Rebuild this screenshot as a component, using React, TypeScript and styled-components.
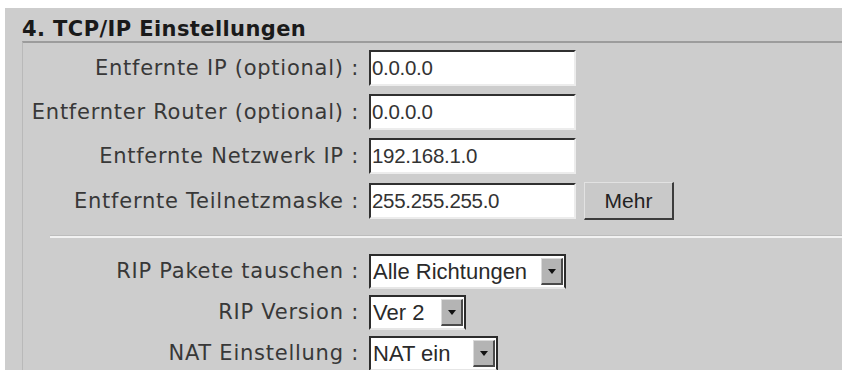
import React from 'react'
import styled, { createGlobalStyle } from 'styled-components'

const GlobalStyle = createGlobalStyle`
  body {
    margin: 0;
    background: #ffffff;
  }
`

const Page = styled.div`
  padding: 8px 0 0 5px;
  height: 370px;
  box-sizing: border-box;
  overflow: hidden;
`

const Panel = styled.div`
  background: #cdcdcd;
  height: 100%;
`

const Title = styled.div`
  height: 33px;
  padding-left: 17px;
  display: flex;
  align-items: flex-end;
  font-family: 'DejaVu Sans', Verdana, sans-serif;
  font-weight: bold;
  font-size: 21px;
  letter-spacing: 0.4px;
  color: #1a1a1a;
  padding-bottom: 1px;
  box-sizing: border-box;
  line-height: 1;
`

const Section = styled.div`
  margin-left: 17px;
  border-top: 2px solid #9c9c9c;
  border-left: 1px solid #b9b9b9;
  padding-top: 7px;
  height: 330px;
`

const Rows = styled.div<{ $gap: number }>`
  display: grid;
  grid-template-columns: 336px auto;
  column-gap: 10px;
  row-gap: ${p => p.$gap}px;
  align-items: center;
  justify-items: start;
`

const Label = styled.div`
  justify-self: end;
  font-family: 'DejaVu Sans', Verdana, sans-serif;
  font-size: 21px;
  letter-spacing: 0.75px;
  color: #383838;
  white-space: nowrap;
  line-height: 1;
`

const Field = styled.div`
  display: flex;
  align-items: center;
  gap: 8px;
`

const TextBox = styled.div`
  width: 207px;
  height: 36px;
  box-sizing: border-box;
  background: #ffffff;
  border-top: 2px solid #303030;
  border-left: 2px solid #303030;
  border-right: 2px solid #ececec;
  border-bottom: 2px solid #ececec;
  display: flex;
  align-items: center;
  padding-left: 1px;
  font-family: 'Liberation Sans', Arial, sans-serif;
  font-size: 20.5px;
  letter-spacing: -0.3px;
  color: #333333;
`

const Button = styled.div`
  width: 90px;
  height: 38px;
  box-sizing: border-box;
  background: #c9c9c9;
  border-top: 1px solid #e2e2e2;
  border-left: 1px solid #e2e2e2;
  border-right: 2px solid #3c3c3c;
  border-bottom: 2px solid #3c3c3c;
  display: flex;
  align-items: center;
  justify-content: center;
  font-family: 'Liberation Sans', Arial, sans-serif;
  font-size: 21px;
  color: #222222;
`

const Divider = styled.div`
  margin: 15px 0 16px 27px;
  height: 2px;
  background: #f2f2f2;
  border-top: 1px solid #bdbdbd;
`

const SelectBox = styled.div<{ $width: number }>`
  width: ${p => p.$width}px;
  height: 35px;
  box-sizing: border-box;
  background: #ffffff;
  border-top: 2px solid #2c2c2c;
  border-left: 2px solid #2c2c2c;
  border-right: 2px solid #2c2c2c;
  border-bottom: 2px solid #e6e6e6;
  display: flex;
  align-items: center;
  justify-content: space-between;
  padding: 0 1px 0 2px;
  font-family: 'Liberation Sans', Arial, sans-serif;
  font-size: 22px;
  color: #2a2a2a;
  white-space: nowrap;
`

const Arrow = styled.span`
  flex: none;
  width: 22px;
  height: 27px;
  box-sizing: border-box;
  background: #b4b4b4;
  border-top: 1px solid #dadada;
  border-left: 1px solid #dadada;
  border-right: 2px solid #4a4a4a;
  border-bottom: 2px solid #4a4a4a;
  display: flex;
  align-items: center;
  justify-content: center;

  &::after {
    content: '';
    border-left: 4px solid transparent;
    border-right: 4px solid transparent;
    border-top: 5px solid #111111;
  }
`

const addresses = [
  { label: 'Entfernte IP (optional) :', value: '0.0.0.0' },
  { label: 'Entfernter Router (optional) :', value: '0.0.0.0' },
  { label: 'Entfernte Netzwerk IP :', value: '192.168.1.0' },
  { label: 'Entfernte Teilnetzmaske :', value: '255.255.255.0', more: true },
]

const selects = [
  { label: 'RIP Pakete tauschen :', value: 'Alle Richtungen', width: 197 },
  { label: 'RIP Version :', value: 'Ver 2', width: 97 },
  { label: 'NAT Einstellung :', value: 'NAT ein', width: 129 },
]

const App: React.FC = () => (
  <Page>
    <GlobalStyle />
    <Panel>
      <Title>4. TCP/IP Einstellungen</Title>
      <Section>
        <Rows $gap={8}>
          {addresses.map(a => (
            <React.Fragment key={a.label}>
              <Label>{a.label}</Label>
              <Field>
                <TextBox>{a.value}</TextBox>
                {a.more && <Button>Mehr</Button>}
              </Field>
            </React.Fragment>
          ))}
        </Rows>
        <Divider />
        <Rows $gap={6}>
          {selects.map(s => (
            <React.Fragment key={s.label}>
              <Label>{s.label}</Label>
              <SelectBox $width={s.width}>
                {s.value}
                <Arrow />
              </SelectBox>
            </React.Fragment>
          ))}
        </Rows>
      </Section>
    </Panel>
  </Page>
)

export default App
